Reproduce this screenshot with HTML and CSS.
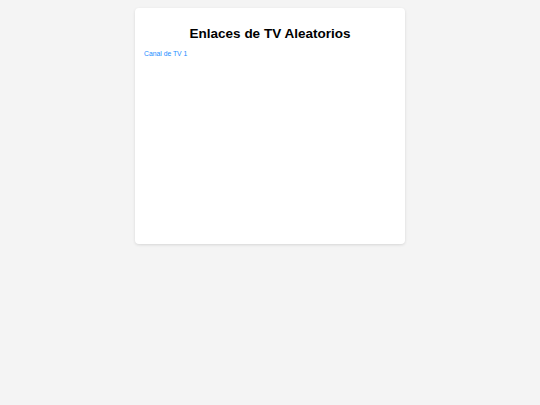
FILE: index.html
```html
<!DOCTYPE html>
<html lang="es">
<head>
    <meta charset="UTF-8">
    <title>Enlaces de TV Aleatorios</title>
    <link rel="stylesheet" href="styles.css">
</head>
<body>
<div class="container">
    <h1>Enlaces de TV Aleatorios</h1>
    <div class="links">
        <a href="#" class="tv-link">Canal de TV 1</a>
    </div>
</div>
</body>
</html>
```

FILE: styles.css
```css
body {
    margin: 0;
    padding: 8px 0;
    background-color: #f4f4f4;
    font-family: "Liberation Sans", Arial, sans-serif;
}

.container {
    width: 270px;
    min-height: 236px;
    margin: 0 auto;
    padding: 9px;
    box-sizing: border-box;
    background-color: #fff;
    border-radius: 4px;
    box-shadow: 0 1px 3px rgba(0, 0, 0, 0.12);
}

h1 {
    margin: 9px 0 8px;
    font-size: 13.5px;
    line-height: 16px;
    text-align: center;
    color: #000;
}

.links {
    font-size: 6.8px;
    line-height: 8px;
}

.tv-link {
    color: #1a8cff;
    text-decoration: none;
}
```
